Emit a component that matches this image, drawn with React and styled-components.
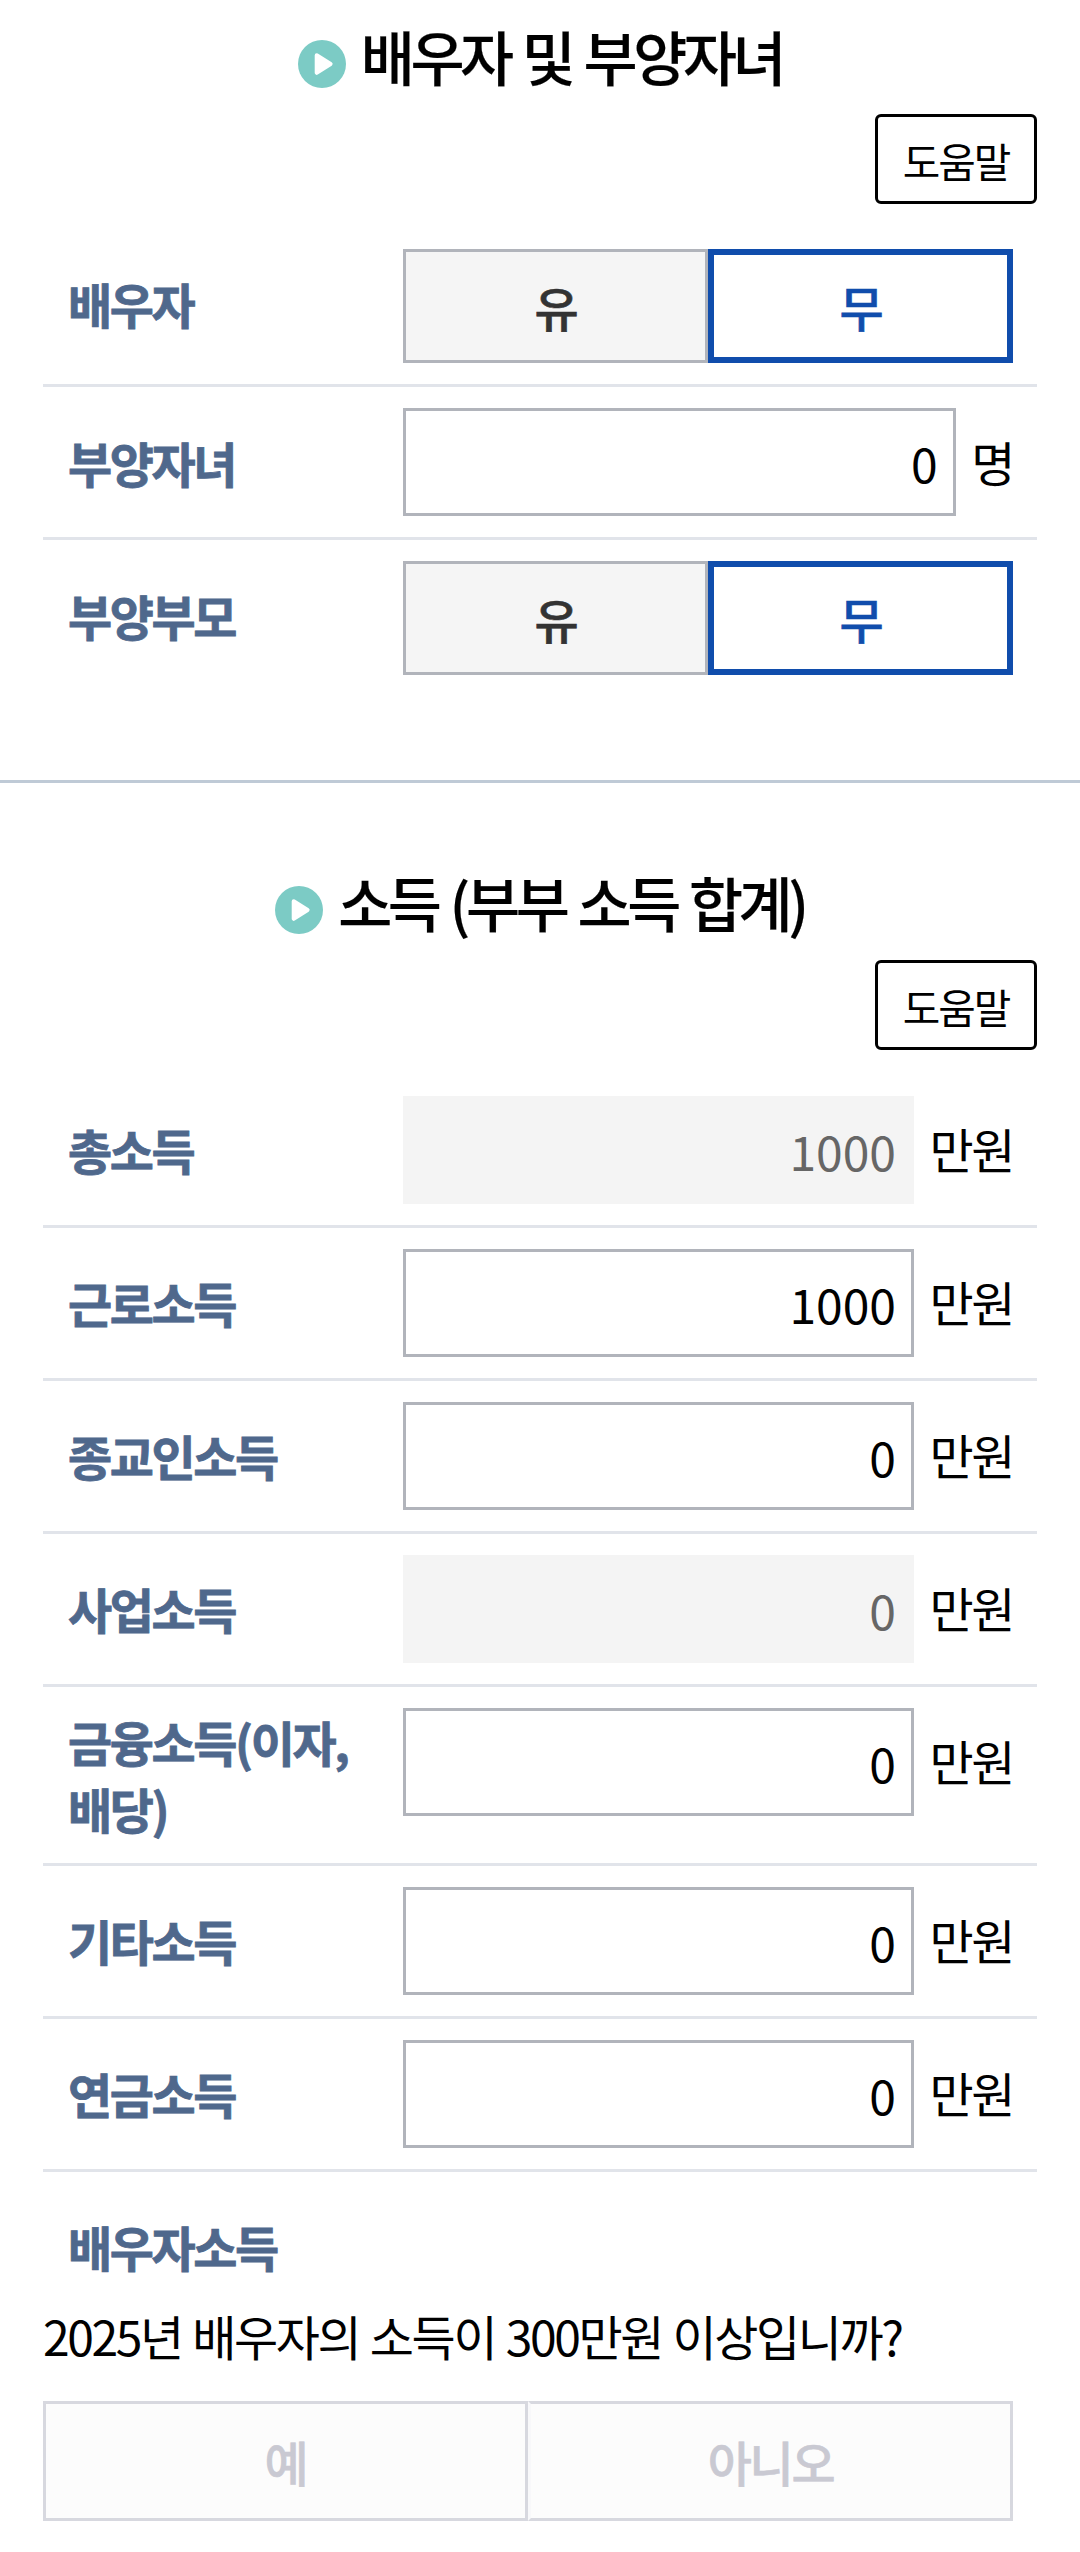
import React, { useState } from 'react';
import styled, { createGlobalStyle } from 'styled-components';

const GlobalStyle = createGlobalStyle`
  * {
    box-sizing: border-box;
  }

  body {
    margin: 0;
    background: #fff;
    color: #000;
    font-family: 'Noto Sans CJK KR', 'Noto Sans', sans-serif;
    font-size: 48px;
    line-height: 1.4;
    letter-spacing: -2.4px;
    word-break: keep-all;
  }

  button,
  input {
    margin: 0;
    border-radius: 0;
    color: inherit;
    font: inherit;
    letter-spacing: inherit;
  }
`;

const incomeRows = [
  { id: 'total', label: '총소득', value: '1000', disabled: true },
  { id: 'work', label: '근로소득', value: '1000' },
  { id: 'religion', label: '종교인소득', value: '0' },
  { id: 'business', label: '사업소득', value: '0', disabled: true },
  { id: 'finance', label: '금융소득(이자, 배당)', value: '0' },
  { id: 'etc', label: '기타소득', value: '0' },
  { id: 'pension', label: '연금소득', value: '0' },
];

const SectionHeader = ({ title }) => (
  <>
    <TitleBar>
      <TitleIcon viewBox="0 0 48 48">
        <circle cx="24" cy="24" r="24" fill="#7ccbc5" />
        <path d="M18.7 15.2 L32.6 24 L18.7 32.8 Z" fill="#fff" stroke="#fff" strokeWidth="4" strokeLinejoin="round" />
      </TitleIcon>
      <Title>{title}</Title>
    </TitleBar>
    <HelpRow>
      <HelpButton type="button">도움말</HelpButton>
    </HelpRow>
  </>
);

const YesNo = () => {
  const [value, setValue] = useState('무');
  return (
    <Toggle>
      {['유', '무'].map(option => (
        <ToggleButton
          key={option}
          type="button"
          $active={option === value}
          onClick={() => setValue(option)}
        >
          {option}
        </ToggleButton>
      ))}
    </Toggle>
  );
};

const NumberField = ({ value, unit, disabled }) => (
  <Field>
    <NumberInput defaultValue={value} disabled={disabled} inputMode="numeric" />
    <Unit>{unit}</Unit>
  </Field>
);

const App = () => (
  <>
    <GlobalStyle />
    <Section>
      <SectionHeader title="배우자 및 부양자녀" />
      <Table>
        <Row>
          <Label>배우자</Label>
          <YesNo />
        </Row>
        <Row>
          <Label>부양자녀</Label>
          <NumberField value="0" unit="명" />
        </Row>
        <Row $last>
          <Label>부양부모</Label>
          <YesNo />
        </Row>
      </Table>
    </Section>

    <Section $divided>
      <SectionHeader title="소득 (부부 소득 합계)" />
      <Table>
        {incomeRows.map(row => (
          <Row key={row.id}>
            <Label>{row.label}</Label>
            <NumberField value={row.value} unit="만원" disabled={row.disabled} />
          </Row>
        ))}
        <Row $last>
          <Label>배우자소득</Label>
        </Row>
      </Table>
      <Question>2025년 배우자의 소득이 300만원 이상입니까?</Question>
      <Answers>
        <AnswerButton type="button" disabled>예</AnswerButton>
        <AnswerButton type="button" disabled>아니오</AnswerButton>
      </Answers>
    </Section>
  </>
);

const Section = styled.section`
  padding: ${props => (props.$divided ? '62.7px 43px 31px' : '0 43px 105px')};
  border-top: ${props => (props.$divided ? '3px solid #bfcad6' : 'none')};
`;

const TitleBar = styled.div`
  display: flex;
  justify-content: center;
  gap: 15px;
  height: 114.3px;
`;

const TitleIcon = styled.svg`
  flex: none;
  width: 48px;
  height: 48px;
  margin-top: 39.7px;
`;

const Title = styled.h2`
  margin: 15.6px 0 0;
  font-size: 58.8px;
  font-weight: 500;
  line-height: 80px;
  letter-spacing: -4.4px;
  word-spacing: 3.2px;
  white-space: nowrap;
  -webkit-text-stroke: 0.2px currentColor;
`;

const HelpRow = styled.div`
  display: flex;
  justify-content: flex-end;
`;

const HelpButton = styled.button`
  width: 162px;
  height: 90px;
  padding: 2px 0 0;
  border: 3px solid #000;
  border-radius: 6px;
  background: #fff;
  font-size: 40.8px;
  letter-spacing: -2.04px;
`;

const Table = styled.div`
  margin-top: 24.2px;
`;

const Row = styled.div`
  display: flex;
  align-items: flex-start;
  padding: 21px 24px ${props => (props.$last ? '0' : '21px')};
  border-bottom: ${props => (props.$last ? 'none' : '3px solid #e1e4ea')};
`;

const Label = styled.div`
  display: flex;
  flex: none;
  align-items: center;
  width: 336px;
  min-height: 108px;
  padding-left: 1px;
  padding-right: 40px;
  color: #4f688c;
  font-weight: 700;
  -webkit-text-stroke: 0.8px currentColor;
`;

const Toggle = styled.div`
  display: flex;
  flex: 1;
`;

const ToggleButton = styled.button`
  flex: none;
  width: 50%;
  height: 114px;
  padding: 0;
  border: ${props => (props.$active ? '6px solid #104dac' : '3px solid #b1b4bb')};
  background: ${props => (props.$active ? '#fff' : '#f5f5f5')};
  color: ${props => (props.$active ? '#104dac' : '#333')};
  font-weight: 500;
  -webkit-text-stroke: 0.6px currentColor;
`;

const Field = styled.div`
  display: flex;
  flex: 1;
  align-items: center;
  gap: 15.5px;
  min-width: 0;
`;

const NumberInput = styled.input`
  flex: 1;
  width: 0;
  min-width: 0;
  height: 108px;
  padding: 0 15px;
  border: 3px solid #b1b4bb;
  background: #fff;
  letter-spacing: 0;
  text-align: right;

  &:disabled {
    border-color: #f4f4f4;
    background: #f4f4f4;
    color: #666;
  }
`;

const Unit = styled.span`
  flex: none;
  padding-bottom: 2px;
`;

const Question = styled.p`
  margin: 1px 0 0;
  word-spacing: 2.2px;
  white-space: nowrap;
`;

const Answers = styled.div`
  display: flex;
  margin-top: 32px;
  padding-right: 24px;
`;

const AnswerButton = styled.button`
  flex: none;
  width: 50%;
  height: 120px;
  padding: 0;
  border: 3px solid #d7d8df;
  background: #fcfcfc;
  color: #c9c9d2;
  font-weight: 500;
  -webkit-text-stroke: 0.6px currentColor;

  & + & {
    border-left-color: #f8f8fa;
  }
`;

export default App;
